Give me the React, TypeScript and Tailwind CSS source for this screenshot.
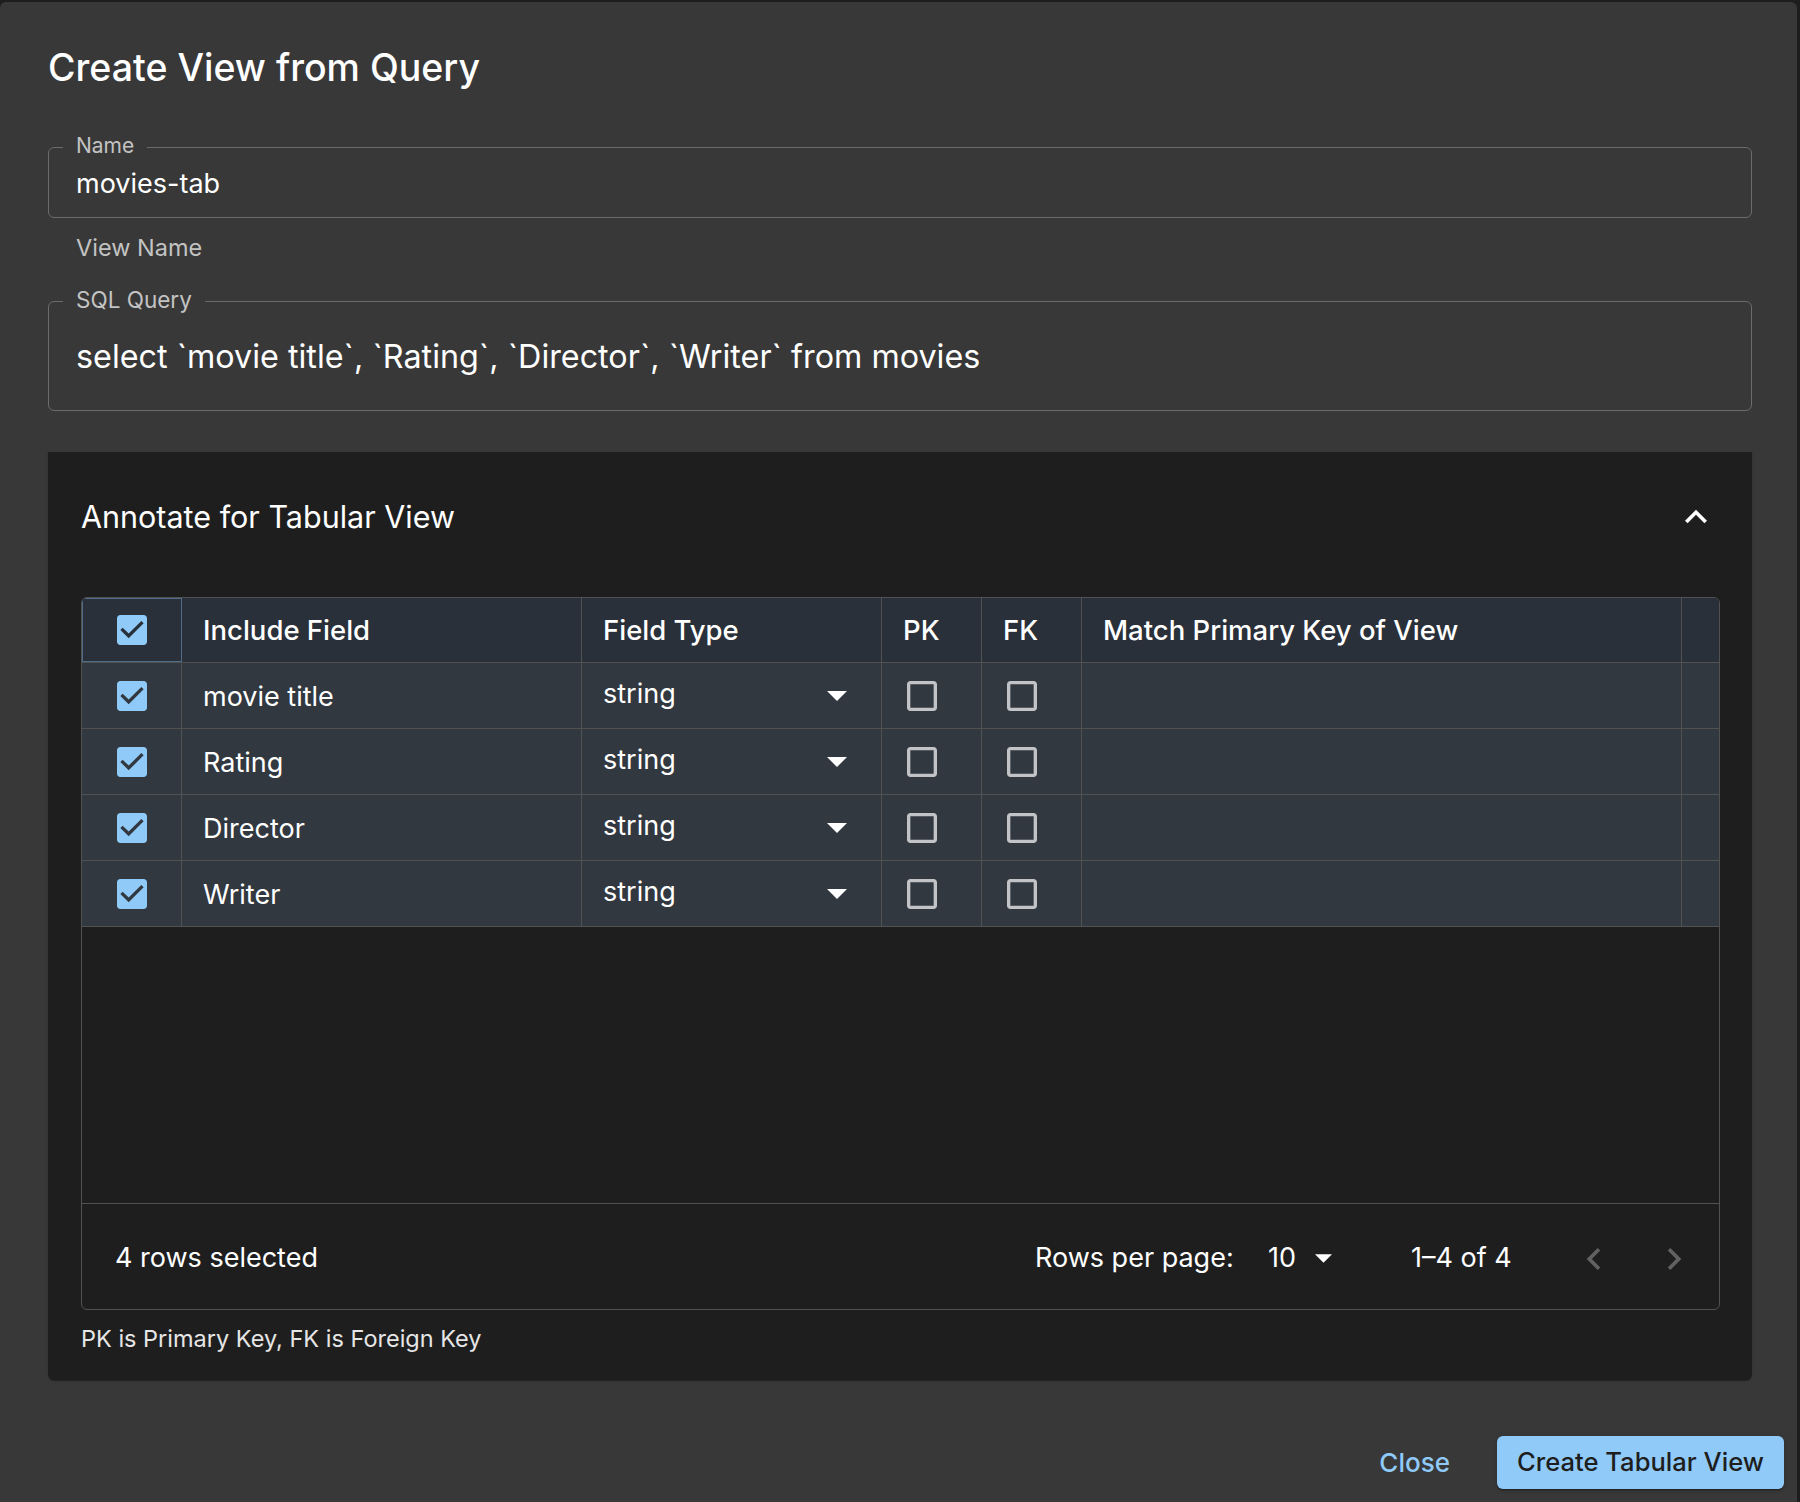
import React from "react";

const fields = ["movie title", "Rating", "Director", "Writer"];

const CheckedBox = () => (
  <svg width="40" height="40" viewBox="0 0 24 24">
    <path
      fill="#90caf9"
      d="M19 3H5c-1.11 0-2 .9-2 2v14c0 1.1.89 2 2 2h14c1.11 0 2-.9 2-2V5c0-1.1-.89-2-2-2zm-9 14l-5-5 1.41-1.41L10 14.17l7.59-7.59L19 8l-9 9z"
    />
  </svg>
);

const EmptyBox = () => (
  <svg width="40" height="40" viewBox="0 0 24 24">
    <path
      fill="rgba(255,255,255,0.7)"
      d="M19 5v14H5V5h14m0-2H5c-1.1 0-2 .9-2 2v14c0 1.1.9 2 2 2h14c1.1 0 2-.9 2-2V5c0-1.1-.9-2-2-2z"
    />
  </svg>
);

const DropTriangle = ({ w = 20, h = 10 }: { w?: number; h?: number }) => (
  <svg width={w} height={h} viewBox="0 0 20 10">
    <path fill="#fff" d="M0 0h20L10 10z" />
  </svg>
);

const cell = "border-r border-[#515151] flex items-center";

const App: React.FC = () => {
  return (
    <div className="h-[1502px] overflow-hidden bg-[#1d1d1d] pt-[2px] font-['Inter','Noto_Sans',sans-serif] text-white">
      <div className="w-[1797px] h-[1500px] bg-[#383838] rounded-t-[6px] pl-[48px] pr-[45px] pt-[42px]">
        <h2 className="text-[37.5px] leading-[48px] font-medium">Create View from Query</h2>

        {/* name */}
        <div className="relative mt-[55px] border border-[#6b6b6b] rounded-[6px] px-[27px] pt-[19px] pb-[16px]">
          <span className="absolute top-[-12px] left-[14px] px-[13px] bg-[#383838] text-[21px] leading-[20px] text-[#c3c3c3]">
            Name
          </span>
          <div className="text-[27px] leading-[34px]">movies-tab</div>
        </div>
        <div className="mt-[15px] pl-[28px] text-[23.5px] leading-[30px] text-[#c3c3c3]">View Name</div>

        {/* sql */}
        <div className="relative mt-[38px] border border-[#6b6b6b] rounded-[6px] px-[27px] pt-[35px] pb-[33px]">
          <span className="absolute top-[-12px] left-[14px] px-[13px] bg-[#383838] text-[22.5px] leading-[20px] text-[#c3c3c3]">
            SQL Query
          </span>
          <div className="text-[32.3px] leading-[40px]">
            select `movie title`, `Rating`, `Director`, `Writer` from movies
          </div>
        </div>

        {/* accordion */}
        <div className="mt-[41px] bg-[#1e1e1e] rounded-b-[6px] shadow-[0_2px_1px_-1px_rgba(0,0,0,0.2),0_1px_1px_0_rgba(0,0,0,0.14),0_1px_3px_0_rgba(0,0,0,0.12)] pl-[33px] pr-[32px] pb-[26px]">
          <div className="flex items-center justify-between pt-[43px] pr-[2px]">
            <span className="text-[30.5px] leading-[40px]">Annotate for Tabular View</span>
            <svg width="44" height="44" viewBox="0 0 24 24">
              <path fill="#fff" d="M12 8l-6 6 1.41 1.41L12 10.83l4.59 4.58L18 14z" />
            </svg>
          </div>

          <div className="mt-[58px] border border-[#515151] rounded-[6px] overflow-hidden">
            {/* header */}
            <div className="grid grid-cols-[100px_400px_300px_100px_100px_600px_1fr] h-[65px] bg-[#2a3039] border-b border-[#515151] text-[27.5px] font-medium">
              <div className="border border-[#4f6c88] flex items-center justify-center">
                <CheckedBox />
              </div>
              <div className={`${cell} pl-[21px] pt-[2px]`}>Include Field</div>
              <div className={`${cell} pl-[21px] pt-[2px]`}>Field Type</div>
              <div className={`${cell} pl-[21px] pt-[2px]`}>PK</div>
              <div className={`${cell} pl-[21px] pt-[2px]`}>FK</div>
              <div className={`${cell} pl-[21px] pt-[2px]`}>Match Primary Key of View</div>
              <div />
            </div>

            {fields.map((f) => (
              <div
                key={f}
                className="grid grid-cols-[100px_400px_300px_100px_100px_600px_1fr] h-[66px] bg-[#323840] border-b border-[#515151] text-[27px]"
              >
                <div className={`${cell} justify-center`}>
                  <CheckedBox />
                </div>
                <div className={`${cell} pl-[21px]`}>
                  <span className="pt-[4px]">{f}</span>
                </div>
                <div className={`${cell} pl-[21px] pr-[34px] justify-between`}>
                  <span className="pb-[2px]">string</span>
                  <DropTriangle />
                </div>
                <div className={`${cell} pl-[20px]`}>
                  <EmptyBox />
                </div>
                <div className={`${cell} pl-[20px]`}>
                  <EmptyBox />
                </div>
                <div className={cell} />
                <div />
              </div>
            ))}

            <div className="h-[276px]" />

            {/* footer */}
            <div className="h-[106px] border-t border-[#515151] flex items-center pt-[4px] text-[27px]">
              <span className="pl-[33px] flex-1">4 rows selected</span>
              <span className="w-[233px]">Rows per page:</span>
              <div className="w-[143px] flex items-center gap-[19px]">
                <span>10</span>
                <DropTriangle w={17} h={9} />
              </div>
              <span className="w-[161px]">1–4 of 4</span>
              <div className="flex items-center gap-[36px] pr-[23px]">
                <svg width="44" height="44" viewBox="0 0 24 24">
                  <path fill="rgba(255,255,255,0.3)" d="M15.41 16.59 10.83 12l4.58-4.59L14 6l-6 6 6 6z" />
                </svg>
                <svg width="44" height="44" viewBox="0 0 24 24">
                  <path fill="rgba(255,255,255,0.3)" d="M8.59 16.59 13.17 12 8.59 7.41 10 6l6 6-6 6z" />
                </svg>
              </div>
            </div>
          </div>

          <p className="mt-[14px] text-[23.5px] leading-[30px] text-[#e6e6e6]">
            PK is Primary Key, FK is Foreign Key
          </p>
        </div>

        {/* actions */}
        <div className="mt-[56px] flex justify-end items-center mr-[-32px] gap-[34px]">
          <button className="text-[26px] font-medium text-[#90caf9] px-[13px] leading-[53px]">Close</button>
          <button className="h-[53px] px-[20px] rounded-[6px] bg-[#90caf9] text-[#1e1e1e] text-[25.6px] font-medium shadow-[0_3px_1px_-2px_rgba(0,0,0,0.2),0_2px_2px_0_rgba(0,0,0,0.14),0_1px_5px_0_rgba(0,0,0,0.12)]">
            Create Tabular View
          </button>
        </div>
      </div>
    </div>
  );
};

export default App;
